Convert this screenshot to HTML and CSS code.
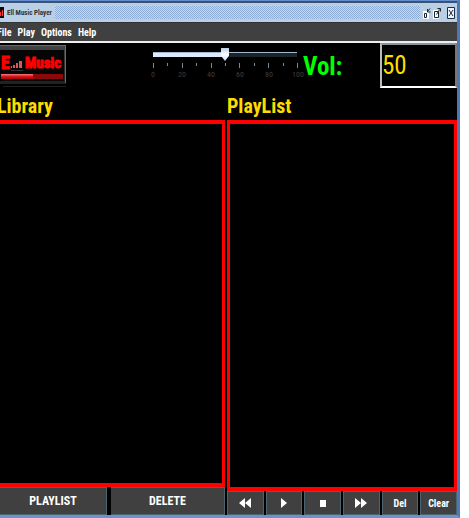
FILE: index.html
```html
<!DOCTYPE html>
<html lang="en">
<head>
<meta charset="utf-8">
<title>Ell Music Player</title>
<link rel="stylesheet" href="styles.css">
</head>
<body>
<main class="window">
  <header class="titlebar">
    <svg class="app-icon" width="4" height="11" viewBox="0 0 4 11" aria-hidden="true"><path fill="#190305" d="M0 0h4v11H0z"/><path fill="#f33" d="M0 5h1v4H0zM2 3h1v6H2z"/></svg>
    <h1 class="title">Ell Music Player</h1>
    <div class="grip"></div>
    <div class="window-buttons">
      <button type="button" aria-label="Minimize"><svg width="8" height="12" viewBox="0 0 8 12"><path fill="#fff" d="M0 4h6v8H0z"/><path fill="none" stroke="#1b2430" d="M1.5 6.500h2v4h-2zM7 1.500 4.500 4.500M4.500 2v3h3"/></svg></button>
      <button type="button" aria-label="Restore"><svg width="8" height="12" viewBox="0 0 8 12"><path fill="#fff" d="M0 3h6v9H0z"/><path fill="none" stroke="#1b2430" d="M1.500 4.500h4v6h-4zM3.500 7.500l3-5M4.500 1.500h3v3"/></svg></button>
      <button type="button" class="close" aria-label="Close"><svg width="8" height="12" viewBox="0 0 8 12"><path fill="#edf4ff" stroke="#1b2d4a" d="M.5.5h7v11h-7z"/><path fill="none" stroke="#1b2430" d="M2 3l4 6M6 3 2 9"/></svg></button>
    </div>
  </header>
  <nav class="menubar">
    <button type="button">File</button>
    <button type="button">Play</button>
    <button type="button">Options</button>
    <button type="button">Help</button>
  </nav>
  <div class="content">
    <section class="controls">
      <svg class="logo" width="68" height="44" viewBox="0 0 68 44" role="img" aria-label="E Music">
        <defs>
          <linearGradient id="rim" x2="0" y2="1"><stop stop-color="#444"/><stop offset="1" stop-color="#202020"/></linearGradient>
          <linearGradient id="bar" x2="0" y2="1"><stop stop-color="#ff7878"/><stop offset=".5" stop-color="#d01820"/><stop offset="1" stop-color="#a00"/></linearGradient>
        </defs>
        <path fill="url(#rim)" d="M0 2h66v39H0z"/><path fill="#050505" d="M0 7h64v31H0z"/>
        <path fill="#6b6b6b" d="M0 2h66v1H0zM65 2h1v38h-1z"/>
        <g class="logo-text"><text class="logo-initial" x="1" y="26">E</text><text x="25" y="25">Music</text></g>
        <path fill="#d55" d="M11 23h1v2h-1zM13 22h2v3h-2zM16 20h2v5h-2zM19 18h3v7h-3z"/>
        <path fill="#333" d="M11 27h12v1H11z"/>
        <path fill="url(#bar)" d="M1 31h32v5H1z"/><path fill="#8c080d" d="M33 31h30v5H33z"/>
        <path fill="#222" d="M3 43h63v1H3z"/>
      </svg>
      <div class="slider">
        <input type="range" min="0" max="100" value="50" aria-label="Volume">
        <div class="ticks"><i></i><i></i><i></i><i></i><i></i><i></i><i></i><i></i><i></i><i></i><i></i></div>
        <div class="scale"><span>0</span><span>20</span><span>40</span><span>60</span><span>80</span><span>100</span></div>
      </div>
      <label class="vol" for="volume">Vol:</label>
      <input class="volume" id="volume" type="text" value="50">
    </section>
    <div class="panes">
      <section class="pane library">
        <h2>Library</h2>
        <div class="list"></div>
        <div class="actions large">
          <button type="button">PLAYLIST</button>
          <button type="button">DELETE</button>
        </div>
      </section>
      <section class="pane">
        <h2>PlayList</h2>
        <div class="list"></div>
        <div class="actions small">
          <button type="button" aria-label="Previous"><svg width="12" height="10" viewBox="0 0 12 10"><path d="M6 0v10L0 5zM12 0v10L6 5z"/></svg></button>
          <button type="button" aria-label="Play"><svg width="12" height="10" viewBox="0 0 12 10"><path d="M3 0v10l6-5z"/></svg></button>
          <button type="button" aria-label="Stop"><svg width="12" height="10" viewBox="0 0 12 10"><path d="M3 2h6v7H3z"/></svg></button>
          <button type="button" aria-label="Next"><svg width="12" height="10" viewBox="0 0 12 10"><path d="M0 0v10l6-5zM6 0v10l6-5z"/></svg></button>
          <button type="button">Del</button>
          <button type="button">Clear</button>
        </div>
      </section>
    </div>
  </div>
</main>
</body>
</html>
```
FILE: styles.css
```css
* { box-sizing: border-box; }

body {
  margin: 0;
  background: #fff;
  font-family: "Roboto Condensed", "Liberation Sans", sans-serif;
}

button, input { margin: 0; font: inherit; }
button { padding: 0; border: 0; background: none; color: inherit; }

.window {
  display: flex;
  flex-direction: column;
  height: 100vh;
  margin-right: 9px;
  border-top: 1px solid #5f8fd0;
  border-right: 3px solid #5077b5;
  border-bottom: 3px solid #7290c8;
  overflow: hidden;
}

.titlebar {
  display: flex;
  align-items: center;
  gap: 3px;
  height: 22px;
  padding-right: 2px;
  border-top: 2px solid #3d5170;
  border-bottom: 1px solid #333;
  background: #b8cfe5;
}

.title {
  margin: 0;
  color: #333;
  font-size: 7px;
  font-weight: bold;
  line-height: 12px;
  white-space: nowrap;
}

.grip {
  flex: 1;
  height: 13px;
  background: conic-gradient(#8cabd5 25%, #c6d9ef 0 50%, #8cabd5 0 75%, #c6d9ef 0) 0 0 / 2px 2px;
}

.window-buttons { display: flex; gap: 2px; }
.window-buttons button { display: flex; }
.window-buttons .close { margin-left: 4px; }

.menubar {
  display: flex;
  align-items: center;
  gap: 6px;
  height: 20px;
  margin-left: -3px;
  border-bottom: 2px solid #eee;
  background: #404040;
  color: #fff;
  font-size: 10px;
  font-weight: bold;
}

.content {
  display: flex;
  flex: 1;
  flex-direction: column;
  min-height: 0;
  background: #000;
}

.controls {
  display: flex;
  align-items: flex-start;
  height: 49px;
}

.logo { flex: none; }

.logo-text {
  fill: #f00;
  stroke: #f00;
  font-size: 15px;
  font-weight: bold;
}

.logo-initial { font-size: 18px; }

.slider { width: 155px; margin-left: 80px; padding-top: 5px; }

.slider input {
  display: block;
  width: 154px;
  height: 14px;
  appearance: none;
  background: linear-gradient(90deg, #dce9ff 50%, #1c242b 0) 5px 5px / 144px 4px no-repeat;
}

.slider input::-webkit-slider-runnable-track {
  height: 14px;
  background: linear-gradient(#a3b8cc, #a3b8cc) 5px 4px / 144px 1px no-repeat;
}

.slider input::-webkit-slider-thumb {
  width: 8px;
  height: 13px;
  appearance: none;
  background: linear-gradient(#b8cfe5, #fff 50%, #c8ddff);
  clip-path: polygon(0 0, 100% 0, 100% 60%, 50% 100%, 0 60%);
}

.ticks {
  display: flex;
  justify-content: space-between;
  height: 6px;
  margin: 1px 5px 0 5px;
}

.ticks i { width: 1px; height: 3px; background: #7a8a99; }
.ticks i:nth-child(odd) { height: 5px; }

.scale {
  display: flex;
  justify-content: space-between;
  margin-top: 1px;
  color: #433c39;
  font-size: 8px;
  line-height: 10px;
}

.scale span { width: 10px; text-align: center; }
.scale span:last-child { display: flex; justify-content: center; }

.vol {
  flex: 1;
  color: #0f0;
  font-size: 25px;
  font-weight: bold;
  line-height: 48px;
}

.volume {
  width: 77px;
  height: 45px;
  padding: 0;
  border: 2px solid;
  border-color: #8794a0 #777 #fff #bbb;
  border-radius: 0;
  background: #000;
  color: #ffdc00;
  font-size: 25px;
}

.panes {
  display: grid;
  flex: 1;
  grid-template-columns: 225fr 230fr;
  gap: 2px;
  min-height: 0;
}

.pane { display: flex; flex-direction: column; min-width: 0; }

.pane h2 {
  margin: 0;
  color: #ffdc00;
  font-size: 20px;
  font-weight: bold;
  line-height: 28px;
}

.library h2 { margin-left: -3px; }

.list { flex: 1; border: solid #f00; border-width: 4px 3px; }
.library .list { border-left: 0; }

.actions { display: grid; color: #fff; font-weight: bold; }
.large { grid-template-columns: 107fr 114fr; gap: 4px; height: 28px; font-size: 12px; }
.small { grid-template-columns: repeat(6, 1fr); gap: 2px; height: 24px; font-size: 10px; }

.actions button {
  display: flex;
  align-items: center;
  justify-content: center;
  border: solid #496571;
  border-width: 1px 1px 1px 0;
  background: #404040;
}

.small button { border-left-width: 1px; }
.actions svg { fill: #fff; }
```
